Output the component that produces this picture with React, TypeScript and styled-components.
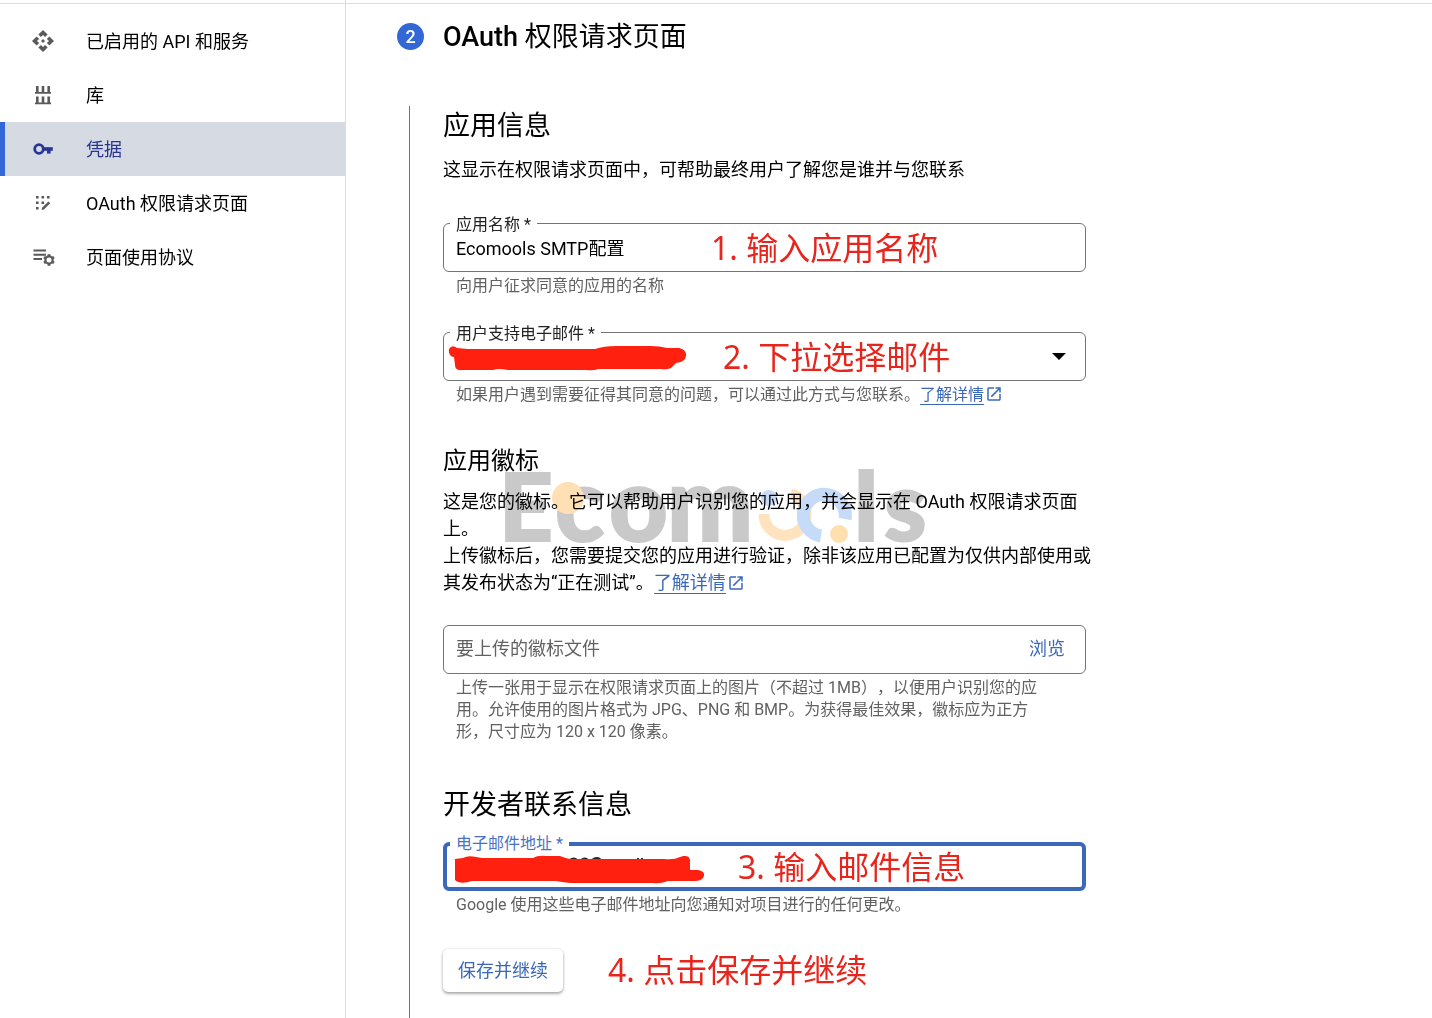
import React from 'react';
import styled, { createGlobalStyle, css } from 'styled-components';
import { MdApi, MdOpenInNew } from 'react-icons/md';

const BLUE = '#3367d6';
const LINK = '#3b68b8';
const NAVY = '#283593';
const MARK = '#e8251c';
const INK = '#ff2010';

const GlobalStyle = createGlobalStyle`
  *, *::before, *::after { box-sizing: border-box; }
  body {
    margin: 0;
    background: #fff;
    color: #000;
    font-family: Roboto, "Noto Sans CJK SC", sans-serif;
    font-size: 18px;
    line-height: 27px;
    text-spacing-trim: space-all;
  }
  h1, h2, h3, p { margin: 0; font-weight: 400; }
`;

const Page = styled.div`
  display: flex;
  min-height: 100vh;
  background: linear-gradient(#dcdde0, #dcdde0) 0 3px / 100% 1px no-repeat;
`;

const Sidebar = styled.nav`
  flex: 0 0 346px;
  padding-top: 14px;
  border-right: 1px solid #dadce0;
`;

const NavItem = styled.a<{ $active?: boolean }>`
  display: flex;
  align-items: center;
  gap: 31px;
  height: 54px;
  padding-left: 26px;
  border-left: 5px solid transparent;
  color: #000;
  text-decoration: none;
  svg {
    flex: none;
    width: 24px;
    height: 24px;
    color: #5a5a5a;
  }
  ${(p) =>
    p.$active &&
    css`
      border-left-color: ${BLUE};
      background: #d6dae3;
      color: ${NAVY};
      svg { color: ${NAVY}; }
    `}
`;

const Main = styled.main`
  display: flex;
  flex-direction: column;
  flex: 1;
  min-width: 0;
  padding-left: 51px;
`;

const StepHeader = styled.header`
  display: flex;
  align-items: center;
  gap: 19px;
  height: 106px;
  padding-bottom: 33px;
`;

const StepBadge = styled.span`
  width: 27px;
  height: 27px;
  border-radius: 50%;
  background: ${BLUE};
  color: #fff;
  font-weight: 500;
  text-align: center;
`;

const StepTitle = styled.h1`
  font-size: 27px;
  line-height: 40px;
  b { font-weight: 500; }
`;

const StepBody = styled.section`
  flex: 1;
  margin-left: 12px;
  padding: 0 24px 26px 33px;
  border-left: 1px solid #757575;
`;

const Form = styled.form`
  max-width: 643px;
`;

const Title = styled.h2<{ $top?: number }>`
  margin-top: ${(p) => p.$top ?? 0}px;
  font-size: 27px;
  line-height: 40px;
`;

const Subtitle = styled.h3`
  margin-top: 38px;
  font-size: 24px;
  line-height: 34px;
`;

const Description = styled.div`
  position: relative;
  margin: 10px -16px 0 0;
`;

const Field = styled.div<{ $top: number }>`
  position: relative;
  margin-top: ${(p) => p.$top}px;
`;

const FloatingLabel = styled.label<{ $focused?: boolean }>`
  position: absolute;
  top: -9px;
  left: 7px;
  padding: 0 6px;
  background: #fff;
  color: ${(p) => (p.$focused ? '#4a72c4' : '#222')};
  font-size: 16px;
  line-height: 22px;
`;

const control = css`
  display: block;
  width: 100%;
  height: 49px;
  padding: 0 12px 2px;
  border: 1px solid #757575;
  border-radius: 6px;
  outline: none;
  background: #fff;
  color: #000;
  font: inherit;
`;

const TextInput = styled.input<{ $focused?: boolean }>`
  ${control}
  ${(p) => p.$focused && css`border: 4px solid ${LINK};`}
`;

const Select = styled.select`
  ${control}
  appearance: none;
`;

const Caret = styled.svg`
  position: absolute;
  top: 21px;
  right: 20px;
  width: 14px;
  height: 7px;
  pointer-events: none;
`;

const FileBox = styled.div`
  ${control}
  display: flex;
  align-items: center;
  justify-content: space-between;
  padding-right: 20px;
`;

const FileInput = styled.input`
  flex: 1;
  min-width: 0;
  padding: 0;
  border: 0;
  outline: none;
  background: none;
  font: inherit;
  &::placeholder { color: #616161; opacity: 1; }
`;

const BrowseButton = styled.button`
  padding: 0;
  border: 0;
  background: none;
  color: ${LINK};
  font: inherit;
`;

const Helper = styled.p`
  margin-top: 3px;
  padding: 0 40px 0 13px;
  color: #616161;
  font-size: 16px;
  line-height: 22px;
`;

const Link = styled.a`
  color: ${LINK};
  text-decoration: none;
  white-space: nowrap;
  span { border-bottom: 1px solid ${LINK}; }
  svg {
    width: 18px;
    height: 18px;
    margin-left: 1px;
    vertical-align: -3px;
  }
`;

const Annotation = styled.span`
  color: ${MARK};
  font-family: "Noto Sans", "Noto Sans CJK SC", sans-serif;
  font-size: 32px;
  line-height: 44px;
  white-space: nowrap;
`;

const FieldAnnotation = styled(Annotation)<{ $left: number }>`
  position: absolute;
  top: 3px;
  left: ${(p) => p.$left}px;
  pointer-events: none;
`;

const Scribble = styled.svg`
  position: absolute;
  top: 10px;
  left: 5px;
  width: 260px;
  height: 34px;
  pointer-events: none;
`;

const Watermark = styled.svg`
  position: absolute;
  top: -60px;
  left: 49px;
  width: 450px;
  height: 150px;
  mix-blend-mode: multiply;
  pointer-events: none;
`;

const Actions = styled.div`
  display: flex;
  align-items: center;
  gap: 45px;
  margin-top: 32px;
`;

const SaveButton = styled.button`
  height: 43px;
  padding: 0 15px;
  border: 0;
  border-radius: 5px;
  background: #fff;
  box-shadow: 0 2px 3px rgba(0, 0, 0, 0.3), 0 0 3px rgba(0, 0, 0, 0.14);
  color: ${LINK};
  font: inherit;
`;

const LibraryIcon = () => (
  <svg viewBox="0 0 24 24" fill="currentColor" aria-hidden="true">
    <path d="M5 3h2.600v6H5zM10.700 3h2.600v6h-2.600zM16.400 3H19v6h-2.600zM4 9h16v1.800H4zM5 13.500h2.600v6H5zM10.700 13.500h2.600v6h-2.600zM16.400 13.500H19v6h-2.600zM4 19.500h16v1.800H4z" />
  </svg>
);

const KeyIcon = () => (
  <svg viewBox="0 0 24 24" fill="none" stroke="currentColor" aria-hidden="true">
    <circle cx="8" cy="12" r="4.300" strokeWidth="2.800" />
    <path d="M12 12h9.800" strokeWidth="3.600" />
    <path d="M17.800 12v4.600" strokeWidth="3.600" />
  </svg>
);

const ConsentIcon = () => (
  <svg viewBox="0 0 24 24" fill="currentColor" aria-hidden="true">
    <path d="M5 5h2.600v2.600H5zM10.500 5h2.600v2.600h-2.600zM16 5h2.600v2.600H16zM5 10.500h2.600v2.600H5zM10.500 10.500h2.600v2.600h-2.600zM5 16h2.600v2.600H5z" />
    <path d="M10.800 18.800v-1.800l6.600-6.600 1.800 1.800-6.600 6.600z" />
  </svg>
);

const AgreementIcon = () => (
  <svg viewBox="0 0 24 24" fill="none" stroke="currentColor" aria-hidden="true">
    <path d="M2.500 5.500H15M2.500 9.800H15M2.500 14H11" strokeWidth="2" />
    <circle cx="18" cy="15" r="3.600" strokeWidth="2.200" />
    <path
      d="M18 9.200v2M18 18.800v2M13 12.100l1.700 1M21.300 16.900l1.700 1M13 17.900l1.700-1M21.300 13.100l1.700-1"
      strokeWidth="2.800"
    />
  </svg>
);

const LearnMore = () => (
  <Link href="#learn-more">
    <span>了解详情</span>
    <MdOpenInNew aria-hidden="true" />
  </Link>
);

const BrandWatermark = () => (
  <Watermark viewBox="-10 -40 450 150" aria-hidden="true">
    <g
      fill="#c9c9c9"
      stroke="#c9c9c9"
      strokeWidth="2"
      fontFamily="Lato, sans-serif"
      fontWeight="900"
    >
      <text x="-3" y="73" fontSize="94">E</text>
      <text x="53 107 165" y="73" fontSize="102">com</text>
      <text x="352 382" y="73" fontSize="96">ls</text>
    </g>
    <circle cx="66" cy="30" r="16" fill="#ffe0b5" />
    <circle cx="267" cy="30" r="8" fill="#c6dbf8" />
    <path d="M262 46a21 21 0 1 0 38-12q-4-7-11-8" fill="none" stroke="#ffe3bf" strokeWidth="11" />
    <path d="M319 68A21 21 0 1 1 343 51" fill="none" stroke="#c6dbf8" strokeWidth="13" />
    <circle cx="337" cy="66" r="9" fill="#ffdfb0" />
  </Watermark>
);

export default function App() {
  return (
    <>
      <GlobalStyle />
      <Page>
        <Sidebar>
          <NavItem href="#apis"><MdApi aria-hidden="true" />已启用的 API 和服务</NavItem>
          <NavItem href="#library"><LibraryIcon />库</NavItem>
          <NavItem href="#credentials" $active aria-current="page"><KeyIcon />凭据</NavItem>
          <NavItem href="#consent"><ConsentIcon />OAuth 权限请求页面</NavItem>
          <NavItem href="#agreement"><AgreementIcon />页面使用协议</NavItem>
        </Sidebar>
        <Main>
          <StepHeader>
            <StepBadge>2</StepBadge>
            <StepTitle><b>OAuth</b> 权限请求页面</StepTitle>
          </StepHeader>
          <StepBody>
            <Form onSubmit={(e) => e.preventDefault()}>
              <Title>应用信息</Title>
              <Description>
                <p>这显示在权限请求页面中，可帮助最终用户了解您是谁并与您联系</p>
              </Description>

              <Field $top={40}>
                <TextInput id="app-name" defaultValue="Ecomools SMTP配置" />
                <FloatingLabel htmlFor="app-name">应用名称 *</FloatingLabel>
                <FieldAnnotation $left={268}>1. 输入应用名称</FieldAnnotation>
              </Field>
              <Helper>向用户征求同意的应用的名称</Helper>

              <Field $top={35}>
                <Select id="support-email" defaultValue="">
                  <option value="" />
                </Select>
                <FloatingLabel htmlFor="support-email">用户支持电子邮件 *</FloatingLabel>
                <Caret viewBox="0 0 14 7" aria-hidden="true"><path d="M0 0h14L7 7z" /></Caret>
                <Scribble viewBox="0 0 260 34" aria-hidden="true">
                  <path
                    fill={INK}
                    d="M1 7Q4 2 9 6L20 7H147Q156 4 168 4H202Q212 4 219 6H231Q239 8 238 14T228 21L223 26Q219 28 212 27H150Q146 29 138 28H60Q50 26 45 28H14Q7 29 7 23L6 15Q0 14 1 7Z"
                  />
                </Scribble>
                <FieldAnnotation $left={280}>2. 下拉选择邮件</FieldAnnotation>
              </Field>
              <Helper>如果用户遇到需要征得其同意的问题，可以通过此方式与您联系。<LearnMore /></Helper>

              <Subtitle>应用徽标</Subtitle>
              <Description>
                <p>这是您的徽标。它可以帮助用户识别您的应用，并会显示在 OAuth 权限请求页面上。</p>
                <p>
                  上传徽标后，您需要提交您的应用进行验证，除非该应用已配置为仅供内部使用或其发布状态为“正在测试”。<LearnMore />
                </p>
                <BrandWatermark />
              </Description>

              <Field $top={29}>
                <FileBox>
                  <FileInput aria-label="要上传的徽标文件" placeholder="要上传的徽标文件" />
                  <BrowseButton type="button">浏览</BrowseButton>
                </FileBox>
              </Field>
              <Helper>
                上传一张用于显示在权限请求页面上的图片（不超过 1MB），以便用户识别您的应用。允许使用的图片格式为 JPG、PNG 和 BMP。为获得最佳效果，徽标应为正方形，尺寸应为 120 x 120 像素。
              </Helper>

              <Title $top={42}>开发者联系信息</Title>
              <Field $top={17}>
                <TextInput id="contact-email" type="email" $focused />
                <FloatingLabel htmlFor="contact-email" $focused>电子邮件地址 *</FloatingLabel>
                <Scribble viewBox="0 0 260 34" aria-hidden="true">
                  <path
                    stroke="#222"
                    strokeWidth="2"
                    fill="none"
                    d="M34 6v3M122 8q4-3 7 0M133 8q4-3 7 0M144 8q5-4 9 0M190 6v4M194 6v4M236 4v5"
                  />
                  <path
                    fill={INK}
                    d="M7 7L15 6Q20 3 28 5L34 6H85Q90 3 98 4H112Q119 7 124 7H216Q226 8 232 5Q241 2 242 8V18H250Q257 19 256 24T246 29H220Q212 32 205 31H122Q113 30 108 29H24Q12 33 7 28Z"
                  />
                </Scribble>
                <FieldAnnotation $left={295}>3. 输入邮件信息</FieldAnnotation>
              </Field>
              <Helper>Google 使用这些电子邮件地址向您通知对项目进行的任何更改。</Helper>

              <Actions>
                <SaveButton type="submit">保存并继续</SaveButton>
                <Annotation>4. 点击保存并继续</Annotation>
              </Actions>
            </Form>
          </StepBody>
        </Main>
      </Page>
    </>
  );
}
